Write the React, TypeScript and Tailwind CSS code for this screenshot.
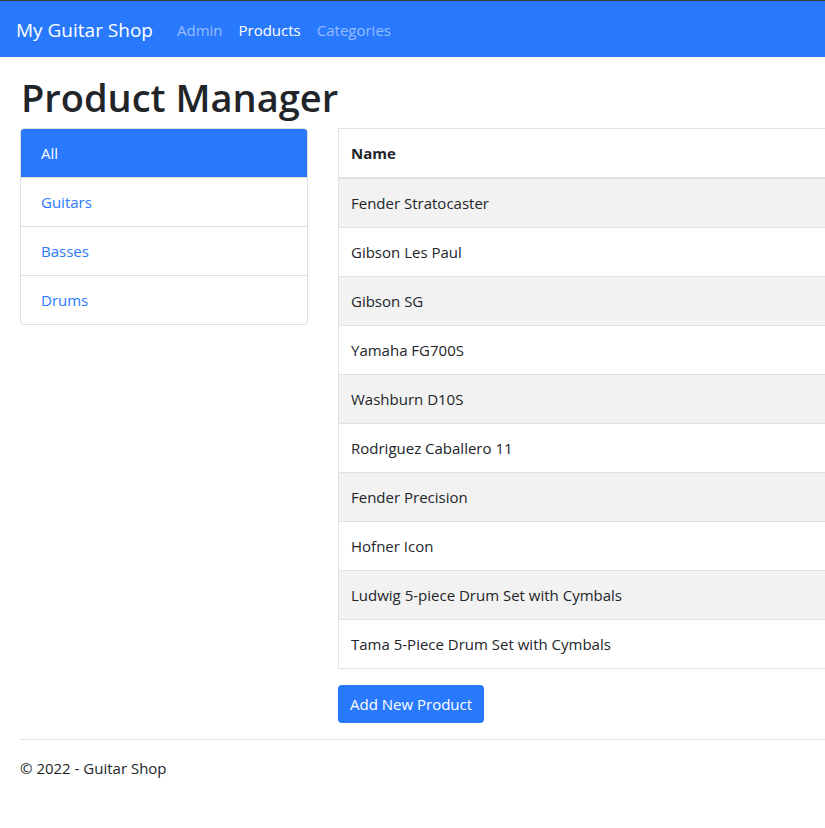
const categories = ["All", "Guitars", "Basses", "Drums"];

const products = [
  "Fender Stratocaster",
  "Gibson Les Paul",
  "Gibson SG",
  "Yamaha FG700S",
  "Washburn D10S",
  "Rodriguez Caballero 11",
  "Fender Precision",
  "Hofner Icon",
  "Ludwig 5-piece Drum Set with Cymbals",
  "Tama 5-Piece Drum Set with Cymbals",
];

export default function App() {
  return (
    <div className="min-h-screen overflow-hidden border-t border-[#3a3a3a] bg-white text-[15px] text-[#212529] font-['Open_Sans',sans-serif]">
      <nav className="flex h-14 items-center bg-[#2979ff] px-4 pt-0.5">
        <span className="mr-4 text-[19px] text-white">My Guitar Shop</span>
        <a className="px-2 text-white/50">Admin</a>
        <a className="px-2 text-white">Products</a>
        <a className="px-2 text-white/50">Categories</a>
      </nav>

      <div className="w-[1300px] pl-5">
        <h1 className="mt-[17px] mb-2 pl-px text-[38px] leading-[46px] font-semibold">Product Manager</h1>

        <div className="flex gap-[30px]">
          <div className="w-[288px] shrink-0">
            <div className="overflow-hidden rounded border border-[#dfdfdf]">
              {categories.map((c, i) => (
                <div
                  key={c}
                  className={
                    i === 0
                      ? "bg-[#2979ff] px-5 py-3 leading-6 text-white"
                      : "border-t border-[#dfdfdf] px-5 py-3 leading-6 text-[#2979ff]"
                  }
                >
                  {c}
                </div>
              ))}
            </div>
          </div>

          <div className="flex-1">
            <table className="w-full border border-[#dee2e6] border-collapse">
              <thead>
                <tr className="border-b-2 border-[#dee2e6]">
                  <th className="p-3 text-left leading-6 font-bold">Name</th>
                </tr>
              </thead>
              <tbody>
                {products.map((p, i) => (
                  <tr key={p} className={`border-t border-[#dee2e6] ${i % 2 === 0 ? "bg-[#f2f2f2]" : "bg-white"}`}>
                    <td className="p-3 leading-6">{p}</td>
                  </tr>
                ))}
              </tbody>
            </table>

            <button className="mt-4 rounded bg-[#2979ff] px-3 py-[7px] leading-6 text-white">Add New Product</button>
          </div>
        </div>

        <hr className="mt-4 border-[#e0e0e0]" />
        <footer className="py-4 leading-6">© 2022 - Guitar Shop</footer>
      </div>
    </div>
  );
}
